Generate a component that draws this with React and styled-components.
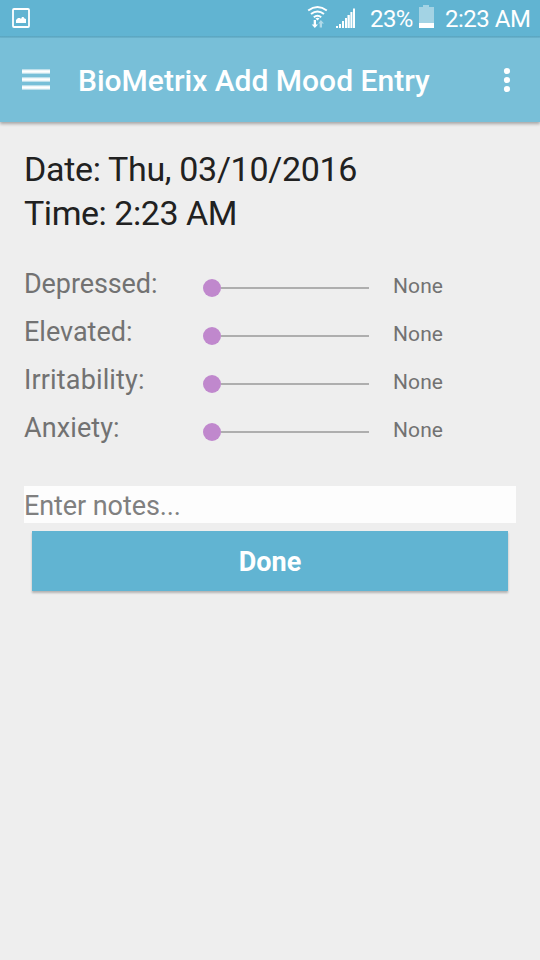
import React from "react";
import styled, { createGlobalStyle } from "styled-components";

const GlobalStyle = createGlobalStyle`
  * { box-sizing: border-box; }
  body { margin: 0; background: #eeeeee; font-family: Roboto, sans-serif; }
`;

const Screen = styled.div`
  width: 540px;
  height: 960px;
  overflow: hidden;
  background: #eeeeee;
`;

const StatusBar = styled.header`
  display: flex;
  align-items: center;
  height: 38px;
  padding: 0 10px 0 12px;
  background: linear-gradient(#61b4d2 36px, #5ba9c5 36px, #5ea6c0 37px, #6ab3cd 37px);
  color: #fff;
`;

const StatusIcon = styled.svg`
  display: block;
  flex: none;
  width: ${(p) => p.$w}px;
  height: 38px;
  margin-right: ${(p) => p.$gap || 0}px;
`;

const Spacer = styled.div`
  flex: 1;
`;

const StatusText = styled.span`
  width: ${(p) => p.$w}px;
  margin-right: ${(p) => p.$gap || 0}px;
  font-size: 24px;
  line-height: 38px;
  letter-spacing: ${(p) => p.$track || 0}px;
  font-weight: 400;
  white-space: nowrap;
`;

const AppBar = styled.div`
  display: flex;
  align-items: center;
  height: 84px;
  padding: 0 28px 0 22px;
  background: #78bfd8;
  box-shadow: 0 2px 3px rgba(0, 0, 0, 0.3);
`;

const MenuButton = styled.button`
  width: 28px;
  height: 84px;
  padding: 0;
  border: 0;
  background: none;
`;

const Title = styled.h1`
  flex: 1;
  margin: 0 0 0 28px;
  padding-top: 2px;
  color: #fff;
  font-size: 30px;
  line-height: 82px;
  font-weight: 500;
  white-space: nowrap;
`;

const OverflowButton = styled.button`
  width: 10px;
  height: 84px;
  padding: 0;
  border: 0;
  background: none;
`;

const Content = styled.main`
  padding: 25px 24px 0;
`;

const Timestamp = styled.div`
  height: 88px;
  margin-bottom: 29px;
  color: #212121;
  font-size: 34px;
  line-height: 44px;
  white-space: nowrap;
`;

const TimestampLine = styled.div`
  letter-spacing: ${(p) => p.$track}px;
`;

const MoodRow = styled.div`
  display: flex;
  align-items: flex-start;
  height: 48px;
  color: #727272;
`;

const MoodLabel = styled.span`
  width: 179px;
  font-size: 27px;
  line-height: 40px;
  letter-spacing: ${(p) => p.$track}px;
`;

const Slider = styled.div`
  display: flex;
  align-items: center;
  width: 166px;
  height: 48px;
`;

const Thumb = styled.div`
  flex: none;
  width: 18px;
  height: 18px;
  border-radius: 50%;
  background: #c088cd;
`;

const Track = styled.div`
  flex: 1;
  height: 2px;
  background: #aeaeae;
`;

const MoodValue = styled.span`
  margin-left: 24px;
  font-size: 21px;
  line-height: 44px;
  letter-spacing: 0.1px;
`;

const Notes = styled.input`
  display: block;
  width: 492px;
  height: 37px;
  margin-top: 30px;
  padding: 3px 0 0;
  border: 0;
  outline: 0;
  background: #fdfdfd;
  font: 27px Roboto, sans-serif;
  letter-spacing: -0.08px;
  &::placeholder { color: #808080; opacity: 1; }
`;

const DoneButton = styled.button`
  display: block;
  width: 476px;
  height: 60px;
  margin: 8px 8px 0;
  padding: 1px 0 0;
  border: 0;
  background: #61b4d2;
  box-shadow: 0 2px 2px rgba(0, 0, 0, 0.25);
  color: #fff;
  font: bold 27px Roboto, sans-serif;
`;

const moods = [
  { label: "Depressed:", track: -0.1 },
  { label: "Elevated:", track: 0 },
  { label: "Irritability:", track: 0.15 },
  { label: "Anxiety:", track: 0.1 },
];

export default function App() {
  return (
    <>
      <GlobalStyle />
      <Screen>
        <StatusBar>
          <StatusIcon $w={18} viewBox="0 0 18 38">
            <rect x="1" y="9" width="16" height="18" rx="1" fill="none" stroke="#fff" strokeWidth="1.800" />
            <path d="M4 23v-3l2-2h2l1 1 1-2h1.500l1 1.500 1.500.5v4z" fill="#fff" />
          </StatusIcon>
          <Spacer />
          <StatusIcon $w={22} $gap={7} viewBox="0 0 22 38">
            <g fill="none" stroke="#fff" strokeWidth="2">
              <path d="M1.200 10.500Q10.500 3.500 19.800 10.500" />
              <path d="M4 14Q10.500 9 17 14" />
              <path d="M6.800 17.200Q10.500 14.300 14.200 17.200" />
            </g>
            <path d="M8.500 18.500Q10.500 17 12.500 18.500L10.500 20.500z" fill="#fff" />
            <path d="M6.700 20h2.300v4.500h2L7.850 28 4.700 24.500h2z" fill="#fff" />
            <path d="M12.700 27.500H15V23.500h2L13.850 20 11.200 23.500h1.500z" fill="#fff" opacity=".5" />
          </StatusIcon>
          <StatusIcon $w={20} $gap={14} viewBox="0 0 20 38" fill="#fff">
            <rect x="0" y="26" width="2" height="2" />
            <rect x="3" y="24" width="2" height="4" />
            <rect x="6" y="21" width="2" height="7" />
            <rect x="9" y="18" width="2" height="10" />
            <rect x="11.500" y="15" width="2.300" height="13" />
            <rect x="14.400" y="12" width="2" height="16" />
            <rect x="17" y="8.500" width="2" height="19.500" />
          </StatusIcon>
          <StatusText $w={43} $gap={6} $track={-0.6}>23%</StatusText>
          <StatusIcon $w={15} $gap={11} viewBox="0 0 15 38">
            <path d="M0 7h4V5h6v2h5v16H0z" fill="#a3d3e4" />
            <rect y="23" width="15" height="5" fill="#fff" />
          </StatusIcon>
          <StatusText $w={85} $track={-0.5}>2:23 AM</StatusText>
        </StatusBar>
        <AppBar>
          <MenuButton aria-label="Open menu">
            <svg width="28" height="84" viewBox="0 0 28 84" display="block">
              <path d="M0 31h28v5H0zM0 39h28v5H0zM0 47h28v5H0z" fill="#bcdfeb" />
              <path d="M0 32.300h28v2.400H0zM0 40.300h28v2.400H0zM0 48.300h28v2.400H0z" fill="#fff" />
            </svg>
          </MenuButton>
          <Title>BioMetrix Add Mood Entry</Title>
          <OverflowButton aria-label="More options">
            <svg width="10" height="84" viewBox="0 0 10 84" display="block" fill="#fff">
              <circle cx="5" cy="33" r="3.100" />
              <circle cx="5" cy="42" r="3.100" />
              <circle cx="5" cy="51" r="3.100" />
            </svg>
          </OverflowButton>
        </AppBar>
        <Content>
          <Timestamp>
            <TimestampLine $track={-0.32}>Date: Thu, 03/10/2016</TimestampLine>
            <TimestampLine $track={-0.45}>Time: 2:23 AM</TimestampLine>
          </Timestamp>
          {moods.map((mood) => (
            <MoodRow key={mood.label}>
              <MoodLabel $track={mood.track}>{mood.label}</MoodLabel>
              <Slider>
                <Thumb />
                <Track />
              </Slider>
              <MoodValue>None</MoodValue>
            </MoodRow>
          ))}
          <Notes placeholder="Enter notes..." />
          <DoneButton>Done</DoneButton>
        </Content>
      </Screen>
    </>
  );
}
